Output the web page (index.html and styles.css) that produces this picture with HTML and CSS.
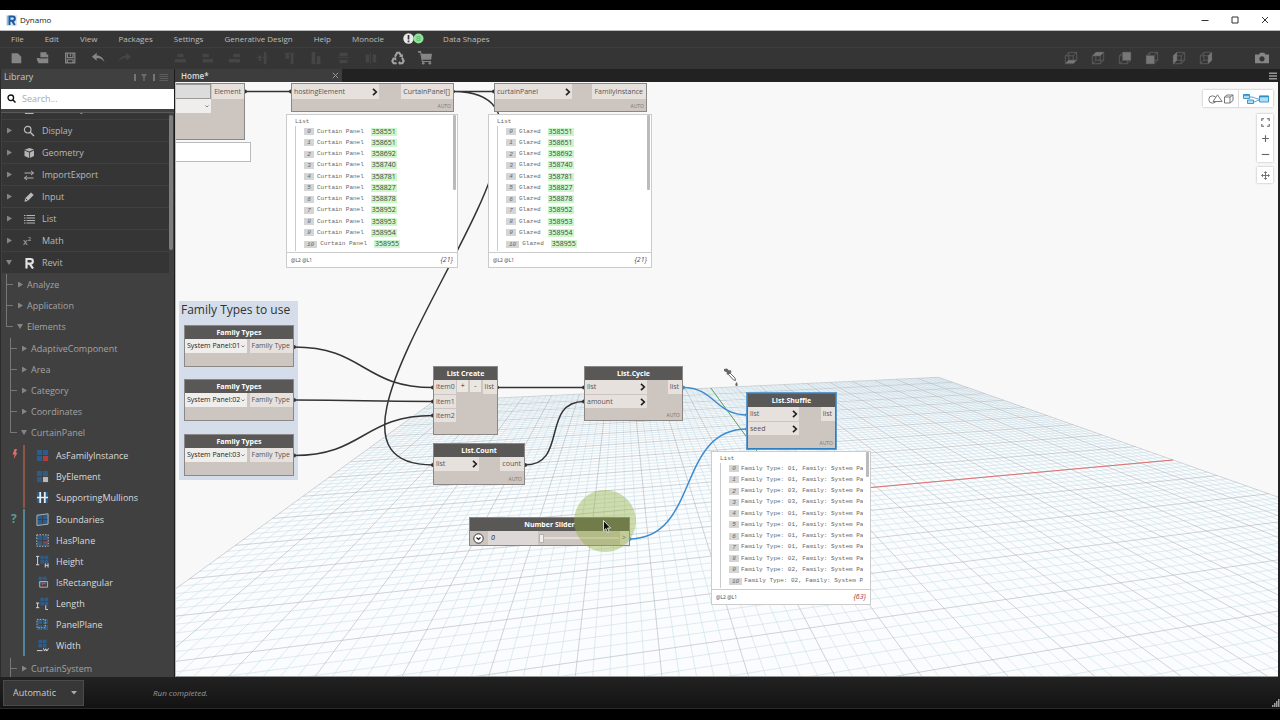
FILE: index.html
```html
<!DOCTYPE html>
<html lang="en">
<head>
<meta charset="utf-8">
<title>Dynamo</title>
<link rel="stylesheet" href="styles.css">
</head>
<body>
<svg class="defs" aria-hidden="true">
  <defs>
    <symbol id="panes" viewBox="0 0 14 14"><path d="M1 1h5.500v5.500H1zM7.500 1H13v5.500H7.500zM1 7.500h5.500V13H1zM7.500 7.500H13V13H7.500z"/></symbol>
    <symbol id="cube" viewBox="0 0 16 16"><path d="M1.500 5.500h9v9h-9zM5.500 1.500h9v9h-9zM1.500 5.500l4-4M10.500 5.500l4-4M10.500 14.500l4-4M1.500 14.500l4-4" fill="none" stroke="#5e5e5e"/></symbol>
    <symbol id="chev" viewBox="0 0 6 8"><path d="M1 .8 4.300 4 1 7.200" fill="none" stroke="#222" stroke-width="1.700"/></symbol>
  </defs>
</svg>
<header class="titlebar">
  <svg class="logo" viewBox="0 0 11 11"><path d="M0 0h11v11H0z" fill="#dbe6f1"/><path d="M3.500 10V1.500h3.200a2 2 0 0 1 0 4.300H3.500M6.200 6 8.800 10" fill="none" stroke="#1d5b9c" stroke-width="2"/><path d="M2 1v9" stroke="#4b8fce"/></svg>
  <span class="apptitle">Dynamo</span>
  <div class="winbuttons">
    <button aria-label="Minimize"><svg viewBox="0 0 8 8"><path d="M.5 4.500h7"/></svg></button>
    <button aria-label="Maximize"><svg viewBox="0 0 8 8"><path d="M1 1h6v6H1z"/></svg></button>
    <button aria-label="Close"><svg viewBox="0 0 8 8"><path d="m1 1 6 6M7 1 1 7"/></svg></button>
  </div>
</header>
<nav class="menubar">
  <button>File</button><button>Edit</button><button>View</button><button>Packages</button><button>Settings</button><button>Generative Design</button><button>Help</button><button>Monocle</button>
  <button class="notice" aria-label="Notifications"><svg viewBox="0 0 21 11"><circle cx="5.500" cy="5.500" r="5.200" fill="#e9e9e9"/><path d="M5.500 2v4.500M5.500 7.600v1.600" stroke="#333" stroke-width="1.700"/><circle cx="15.500" cy="5.500" r="5" fill="#8fe39a"/><path d="M14 3.500h3v4h-3zM14 5.500h3" fill="none" stroke="#6cbd78"/></svg></button>
  <button>Data Shapes</button>
</nav>
<div class="toolbar">
  <div class="tools file">
    <button aria-label="New"><svg viewBox="0 0 16 16"><path d="M3 2.500h7l4 4V14H3z"/></svg></button>
    <button aria-label="Open"><svg viewBox="0 0 16 16"><path d="M5 1.500h7V4h2v3.500H5zM1 8h13v6H3l-2-4z"/><path d="M4 8h9" stroke="#353535"/></svg></button>
    <button aria-label="Save"><svg viewBox="0 0 16 16"><path d="M3 2.500h10.500v11H3zM5 3v4.500h6.500V3M5 13.500v-3.500h6.500v3.500M8.500 3.500v2.500" fill="none" stroke="#858585" stroke-width="1.400"/></svg></button>
    <button aria-label="Undo"><svg viewBox="0 0 16 16"><path d="M1 6.500 6.500 2v3C11 5 14 7.500 15.500 12.500 12.500 9 10 8 6.500 8v3z"/></svg></button>
    <button aria-label="Redo" class="dim"><svg viewBox="0 0 16 16"><path d="M15 6.500 9.500 2v3C5 5 2 7.500.5 12.500 3.500 9 6 8 9.500 8v3z"/></svg></button>
  </div>
  <div class="tools align">
    <button class="dim" aria-label="Align X average"><svg viewBox="0 0 16 16"><path d="M5 3h7v4H5zM2 9h13v4H2z"/></svg></button>
    <button class="dim" aria-label="Align left"><svg viewBox="0 0 16 16"><path d="M3 3h7v4H3zM3 9h12v4H3z"/></svg></button>
    <button class="dim" aria-label="Align right"><svg viewBox="0 0 16 16"><path d="M7 3h8v4H7zM2 9h13v4H2z"/></svg></button>
    <button class="dim" aria-label="Align Y average"><svg viewBox="0 0 16 16"><path d="M4 5h3v6H4zM10 1h3v14h-3zM2 7h13v1H2z"/></svg></button>
    <button class="dim" aria-label="Align top"><svg viewBox="0 0 16 16"><path d="M3 2h11v1H3zM4 3h4v6H4zM10 3h3v12h-3z"/></svg></button>
    <button class="dim" aria-label="Align bottom"><svg viewBox="0 0 16 16"><path d="M3 1h4v13H3zM9 6h4v8H9zM2 14h12v1H2z"/></svg></button>
    <button class="dim" aria-label="Distribute Y"><svg viewBox="0 0 16 16"><path d="M4 2h9v4H4zM4 10h9v4H4zM2 7h13v1H2z"/></svg></button>
    <button class="dim" aria-label="Distribute X"><svg viewBox="0 0 16 16"><path d="M2 4h4v9H2zM10 4h4v9h-4zM7 2h1v13H7z"/></svg></button>
    <button aria-label="Recycle"><svg viewBox="0 0 16 16"><path d="m4.500 6.500 2.500-4.500h2.500l2 3.500M12.500 7.500l2 4-1.500 2.500H9.500M6.500 14H3L1.500 11.500l2-3.500" fill="none" stroke="#a2a2a2" stroke-width="2.400"/><path d="m9 6.500 4.500.5V3zM10.500 11v5L8 13.700zM1 8l5-1v4z" fill="#a2a2a2"/></svg></button>
    <button aria-label="Cart"><svg viewBox="0 0 16 16"><path d="M3 3h13l-1 7H4.500zM0 0h3.500v2H0z"/><path d="m3 1 2 11h10" fill="none" stroke="#858585" stroke-width="1.200"/><circle cx="6" cy="14" r="1.500"/><circle cx="13.500" cy="14" r="1.500"/></svg></button>
  </div>
  <div class="tools views">
    <button aria-label="Bottom"><svg viewBox="0 0 16 16"><use href="#cube"/><path d="M2 14l3-3.500h9L11 14z"/></svg></button>
    <button aria-label="Top"><svg viewBox="0 0 16 16"><use href="#cube"/><path d="M2 5.500l4-4h8.500l-4 4z"/></svg></button>
    <button aria-label="Back"><svg viewBox="0 0 16 16"><use href="#cube"/><path d="M5.500 1.500h9v9h-9z"/></svg></button>
    <button aria-label="Front"><svg viewBox="0 0 16 16"><use href="#cube"/><path d="M1.500 5.500h9v9h-9z"/></svg></button>
    <button aria-label="Left"><svg viewBox="0 0 16 16"><use href="#cube"/><path d="M1.500 5.500l4-4v9l-4 4z"/></svg></button>
    <button aria-label="Right"><svg viewBox="0 0 16 16"><use href="#cube"/><path d="M10.500 5.500l4-4v9l-4 4z"/></svg></button>
  </div>
  <div class="tools camera">
    <button aria-label="Export image"><svg viewBox="0 0 16 16"><path fill-rule="evenodd" d="M0 4h4.500L6 2h4.500L12 4h4v10H0zM8 6a3 3 0 1 0 .01 0z"/></svg></button>
  </div>
</div>
<div class="workarea">
  <aside class="library">
    <div class="libhead"><span>Library</span>
      <svg viewBox="0 0 34 9"><path d="M1 1v7M20 1v7" stroke="#aaa"/><path d="M7 1h6l-2.300 3.500V8H9.300V4.500z" fill="#6a6a6a"/><path d="M25.500 1.500H34M25.500 3.500H34M25.500 5.500H34M25.500 7.500H34" stroke="#5c5c5c"/></svg>
    </div>
    <label class="search"><svg viewBox="0 0 9 9"><circle cx="3.800" cy="3.800" r="2.800" fill="none" stroke="#111" stroke-width="1.300"/><path d="m6 6 2.500 2.500" stroke="#111" stroke-width="1.500"/></svg><input type="text" placeholder="Search..." aria-label="Search"></label>
    <div class="scroller">
      <div class="tree">
        <ul class="cats">
          <li><i></i><svg viewBox="0 0 12 12"><path d="M2.500 1.500h7.500v9H2.500z" fill="none" stroke="#b5b5b5" stroke-width="1.200"/></svg>Dictionary</li>
          <li><i></i><svg viewBox="0 0 12 12"><circle cx="4.700" cy="4.700" r="3.300" fill="none" stroke="#bbb" stroke-width="1.200"/><path d="m7 7 4 4" stroke="#bbb" stroke-width="1.500"/></svg>Display</li>
          <li><i></i><svg viewBox="0 0 12 12"><path d="M1.500 3.500 6 5.500V11L1.500 9zM6.800 5.500l4.200-2v5.500l-4.200 2zM1.500 2.800 6.500 1 11 2.500 6.400 4.600z" fill="#b5b5b5"/></svg>Geometry</li>
          <li><i></i><svg viewBox="0 0 12 12"><path d="M1.500 4h9M8 1.800 10.500 4 8 6M10.500 9h-9M4 6.800 1.500 9 4 11" fill="none" stroke="#b5b5b5"/></svg>ImportExport</li>
          <li><i></i><svg viewBox="0 0 12 12"><path d="m1.500 10.700.7-3.500L8 1.500l2.700 2.500-5.900 6z" fill="#bbb"/><path d="m2.500 7.500 2 2" stroke="#353535"/></svg>Input</li>
          <li><i></i><svg viewBox="0 0 12 12"><path d="M1 2.500h1.500M3.500 2.500H12M1 5h1.500M3.500 5H12M1 7.500h1.500M3.500 7.500H12M1 10h1.500M3.500 10H12" stroke="#b5b5b5" stroke-width="1.200"/></svg>List</li>
          <li><i></i><span class="mathicon">x<sup>2</sup></span>Math</li>
          <li class="open"><i></i><svg viewBox="0 0 12 12"><path d="M3.500 11.500V2h4a2.200 2.200 0 0 1 0 4.700h-3M6.800 6.800 10 11.500" fill="none" stroke="#e3e3e3" stroke-width="2.200"/></svg>Revit</li>
        </ul>
        <ul class="lvl one">
          <li><b></b><i></i>Analyze</li>
          <li><b></b><i></i>Application</li>
          <li class="open last"><b></b><i></i>Elements</li>
        </ul>
        <ul class="lvl two">
          <li><b></b><i></i>AdaptiveComponent</li>
          <li><b></b><i></i>Area</li>
          <li><b></b><i></i>Category</li>
          <li><b></b><i></i>Coordinates</li>
          <li class="open last"><b></b><i></i>CurtainPanel</li>
        </ul>
        <div class="members create">
          <svg class="kind" viewBox="0 0 8 12"><path d="M3.500 0h3L5 4.500h2L2.500 12l1-5.500H1z" fill="#e0696b"/></svg>
          <ul>
            <li><svg viewBox="0 0 14 14"><use href="#panes"/><path d="M7.500 7.500H13V13H7.500z" fill="#b23c3c"/></svg>AsFamilyInstance</li>
            <li><svg viewBox="0 0 14 14"><use href="#panes"/><path d="M7.500 7.500H13V13H7.500z" fill="#b9b9b9"/></svg>ByElement</li>
            <li><svg viewBox="0 0 14 14"><use href="#panes"/><path d="M4.500 1v12M9.500 1v12M1 7h12" stroke="#e6eef5" stroke-width="1.800"/></svg>SupportingMullions</li>
          </ul>
        </div>
        <div class="members query">
          <span class="kind">?</span>
          <ul>
            <li><svg viewBox="0 0 14 14"><use href="#panes"/><path d="M1 2.500 13 .8V12L1 13.500z" fill="none" stroke="#b5b5b5"/></svg>Boundaries</li>
            <li><svg viewBox="0 0 14 14"><use href="#panes"/><path d="M.8.8h12.400v12.400H.8z" fill="none" stroke="#c5c5c5" stroke-dasharray="1.500 1.500"/><path d="M9 9h3v3" fill="none" stroke="#b23c3c"/></svg>HasPlane</li>
            <li><svg viewBox="0 0 14 14"><use href="#panes" x="4" width="10" height="10"/><path d="M0 1.500h3.500M1.700 1.500v9M0 10.500h3.500M10 9v4.500M13 9v4.500M10 11.200h3" fill="none" stroke="#ddd"/></svg>Height</li>
            <li><svg viewBox="0 0 14 14"><use href="#panes" x="2" width="10" height="10"/><path d="M4 6h8.500v6H4z" fill="none" stroke="#b8b8b8"/><path d="M7 10V7.500h2.500V9" fill="none" stroke="#c25555"/></svg>IsRectangular</li>
            <li><svg viewBox="0 0 14 14"><use href="#panes" x="4" width="10" height="10"/><path d="M0 6.500h3.500M1.700 6.500v5M0 11.500h3.500M10.500 9v4.500H13" fill="none" stroke="#ddd"/></svg>Length</li>
            <li><svg viewBox="0 0 14 14"><use href="#panes"/><path d="M1 1.500h9v9H1z" fill="none" stroke="#aebccb" stroke-dasharray="1.500 1.500"/></svg>PanelPlane</li>
            <li><svg viewBox="0 0 14 14"><use href="#panes" x="2" width="10" height="10"/><path d="M1 12.500h6M8 10l1.300 3 1.200-2.500 1.200 2.500L13.500 10" fill="none" stroke="#ddd"/></svg>Width</li>
          </ul>
        </div>
        <ul class="lvl two"><li><b></b><i></i>CurtainSystem</li></ul>
      </div>
      <div class="track"><div class="thumb"></div></div>
    </div>
  </aside>
  <main class="workspace">
    <div class="tabs"><div class="tab">Home*<button aria-label="Close tab"><svg viewBox="0 0 7 7"><path d="m.8.8 5.400 5.400M6.200.8.8 6.200" stroke="#999"/></svg></button></div>
      <button class="burger" aria-label="Tabs menu"><svg viewBox="0 0 8 8"><path d="M0 1.300h8M0 4h8M0 6.700h8" stroke="#999" stroke-width="1.400"/></svg></button></div>
    <div class="canvas">
      <svg class="grid" id="grid" viewBox="175 82 1105 595"></svg>
      <div class="group"><h2>Family Types to use</h2></div>
      <svg class="wires" viewBox="175 82 1105 595">
        <path d="M245 91.500h46M453 91.500h41M453 91.500C628 91.500 258 465 433 465M294 347C364 347 363 387.500 433 387.500M294 400C364 400 363 401.500 433 401.500M294 455.500C364 455.500 363 415.500 433 415.500M497 387.500h87M525 465C568 465 541 401.500 584 401.500"/>
        <path class="blue" d="M683 387.500C715 387.500 715 415 747 415M629 539C700 539 676 429 747 429"/>
        <path class="dots" d="M245 91.500h0M291 91.500h0M453 91.500h0M494 91.500h0M294 347h0M294 400h0M294 455.500h0M433 387.500h0M433 401.500h0M433 415.500h0M433 465h0M497 387.500h0M525 465h0M584 387.500h0M584 401.500h0"/>
        <path class="dots blue" d="M683 387.500h0M747 415h0M747 429h0M629.500 539h0"/>
      </svg>

      <section class="node n-elem"><div class="ports"><div class="stack"><span class="blank"></span><select aria-label="Element category"></select></div><span class="port out">Element</span></div></section>
      <div class="note"></div>
      <section class="node n-host"><div class="ports"><div class="ins"><span class="port">hostingElement<svg><use href="#chev"/></svg></span></div><span class="port out">CurtainPanel[]</span></div><small>AUTO</small></section>
      <section class="node n-inst"><div class="ports"><div class="ins"><span class="port">curtainPanel<svg><use href="#chev"/></svg></span></div><span class="port out">FamilyInstance</span></div><small>AUTO</small></section>

      <section class="node fam f1"><h3>Family Types</h3><div class="ports"><select aria-label="Family type 1"><option>System Panel:01</option></select><span class="port out">Family Type</span></div></section>
      <section class="node fam f2"><h3>Family Types</h3><div class="ports"><select aria-label="Family type 2"><option>System Panel:02</option></select><span class="port out">Family Type</span></div></section>
      <section class="node fam f3"><h3>Family Types</h3><div class="ports"><select aria-label="Family type 3"><option>System Panel:03</option></select><span class="port out">Family Type</span></div></section>

      <section class="node n-create"><h3>List Create</h3><div class="ports"><div class="ins"><span class="port">item0</span><span class="port">item1</span><span class="port">item2</span></div><button>+</button><button>-</button><span class="port out">list</span></div></section>
      <section class="node n-count"><h3>List.Count</h3><div class="ports"><div class="ins"><span class="port">list<svg><use href="#chev"/></svg></span></div><span class="port out">count</span></div><small>AUTO</small></section>
      <section class="node n-cycle"><h3>List.Cycle</h3><div class="ports"><div class="ins"><span class="port">list<svg><use href="#chev"/></svg></span><span class="port">amount<svg><use href="#chev"/></svg></span></div><span class="port out">list</span></div><small>AUTO</small></section>
      <section class="node n-shuffle"><h3>List.Shuffle</h3><div class="ports"><div class="ins"><span class="port">list<svg><use href="#chev"/></svg></span><span class="port">seed<svg><use href="#chev"/></svg></span></div><span class="port out">list</span></div><small>AUTO</small></section>
      <section class="node n-slider"><h3>Number Slider</h3><div class="ports"><button class="expand" aria-label="Slider settings"><svg viewBox="0 0 11 11"><circle cx="5.500" cy="5.500" r="4.700" fill="#fff" stroke="#333"/><path d="M3.500 4.500 5.500 6.500l2-2" fill="none" stroke="#222" stroke-width="1.200"/></svg></button><output>0</output><input type="range" min="0" max="100" value="0" aria-label="Number"><span class="port out">&gt;</span></div></section>

      <section class="preview p-host" data-kind="Curtain Panel" data-count="{21}"></section>
      <section class="preview p-inst" data-kind="Glazed" data-count="{21}"></section>
      <section class="preview p-shuffle" data-kind="types" data-count="{63}"></section>

      <svg class="picker" viewBox="0 0 16 20"><path d="M1 1l3-.500 2 2 1.500-.5 1 2L5.500 7 3.500 6 4 4.500 1 3z" fill="#666"/><path d="m5.500 6.500 1.500-1.500 5 5 .5 2.500-2-.5z" fill="#fff" stroke="#666"/><path d="M13.500 14c2 2.500 1 4 0 4s-2-1.500 0-4z" fill="#666"/></svg>
      <div class="halo"></div>
      <svg class="cursor" viewBox="0 0 8 13"><path d="M.5.5v10.300l2.400-2.200 1.600 3.700 1.600-.7-1.600-3.600H7.600z" fill="#111" stroke="#fff" stroke-width=".8"/></svg>

      <div class="switcher">
        <button aria-label="3D preview"><svg viewBox="0 0 26 10"><g fill="none" stroke="#777"><circle cx="4.500" cy="5.500" r="3.700"/><path d="M9.500.8 14 7.500H5z" fill="#fff"/><path d="M16.500 3h5.500v6h-5.500zM16.500 3l2.500-2h6l-3 2M25 1v5.500L22 9"/></g></svg></button>
        <button aria-label="Graph view"><svg viewBox="0 0 26 10"><path d="M7 3c6 0 4 2 10 2M10 8c4 0 3-2 7-2" fill="none" stroke="#49a3d6"/><path d="M.5.5h6v4h-6zM4.500 6h6v3.500h-6zM16.500 2h9v6h-9z" fill="#b3dcf1" stroke="#3b9bd1"/><path d="M.5 1h6M16.500 2.500h9" stroke="#2f8fc6" stroke-width="1.600"/></svg></button>
      </div>
      <div class="zoomer">
        <button aria-label="Fit"><svg viewBox="0 0 8 8"><path d="M.7 2.700v-2h2M5.300.7h2v2M7.300 5.300v2h-2M2.700 7.300h-2v-2"/></svg></button>
        <button aria-label="Zoom in"><svg viewBox="0 0 8 8"><path d="M4 1v6M1 4h6"/></svg></button>
        <button aria-label="Zoom out"><svg viewBox="0 0 8 8"><path d="M.7 4h6.600"/></svg></button>
      </div>
      <div class="zoomer pan"><button aria-label="Pan"><svg viewBox="0 0 10 10"><path d="M5 1v8M1 5h8M3.500 2 5 .7 6.500 2M3.500 8 5 9.300 6.500 8M2 3.500.7 5 2 6.500M8 3.500 9.300 5 8 6.500"/></svg></button></div>
    </div>
  </main>
</div>
<footer class="status">
  <div class="runmode"><select aria-label="Run mode"><option>Automatic</option></select><svg viewBox="0 0 6 4"><path d="M0 0h6L3 3.500z" fill="#aaa"/></svg></div>
  <span class="message">Run completed.</span>
  <svg class="grip" viewBox="0 0 8 8"><path d="M6 1h1.500M4 3h1.500M6 3h1.500M2 5h1.500M4 5h1.500M6 5h1.500M0 7h1.500M2 7h1.500M4 7h1.500M6 7h1.500" stroke="#ccc" stroke-width="1.500"/></svg>
</footer>
<script src="graph.js"></script>
</body>
</html>
```

FILE: styles.css
```css
* { box-sizing: border-box; }
body {
  margin: 0; height: 100vh; padding: 10px 0 11px; overflow: hidden;
  display: flex; flex-direction: column; background: #000;
  font: 9px/12px "Open Sans", "Noto Sans", sans-serif; color: #aaa;
}
ul { list-style: none; margin: 0; padding: 0; }
button { border: 0; padding: 0; background: none; font: inherit; color: inherit; display: flex; align-items: center; justify-content: center; }
select, input { font: inherit; border: 0; margin: 0; outline: 0; appearance: none; border-radius: 0; }
.defs { position: absolute; width: 0; height: 0; }

.titlebar { flex: none; height: 21px; background: #fff; border-bottom: 1px solid #bbb; display: flex; align-items: center; padding-left: 6px; gap: 3px; color: #222; font-size: 8px; }
.logo { width: 11px; height: 11px; }
.winbuttons { margin-left: auto; display: flex; }
.winbuttons button { width: 30px; height: 20px; }
.winbuttons svg { width: 8px; height: 8px; fill: none; stroke: #333; }

.menubar { flex: none; height: 17px; background: #353535; display: flex; align-items: center; gap: 21px; padding: 0 0 1px 11px; font-size: 8px; color: #bdbdbd; border-bottom: 1px solid #3d3d3d; }
.notice { margin: 0 -2px; }
.notice svg { width: 21px; height: 11px; }

.toolbar { flex: none; height: 21px; background: #353535; display: flex; align-items: center; padding: 0 0 1px 2px; }
.tools { display: grid; grid-auto-flow: column; grid-auto-columns: 1fr; fill: #858585; }
.tools svg { width: 14px; height: 14px; }
.tools .dim { fill: #454545; }
.file { width: 137px; }
.align { width: 273px; margin-left: 27px; }
.views { width: 163px; margin-left: auto; fill: #777; }
.camera { width: 27px; margin: 0 5px 0 28px; }

.workarea { flex: 1; min-height: 0; display: flex; }
.library { flex: none; width: 175px; background: #404040; border-left: 1px solid #2c2c2c; border-right: 1px solid #1c1c1c; display: flex; flex-direction: column; }
.libhead { height: 20px; display: flex; align-items: center; justify-content: space-between; padding: 0 6px 4px 3px; color: #c6c6c6; }
.libhead svg { width: 34px; height: 9px; }
.search { height: 20px; background: #fff; display: flex; align-items: center; padding: 0 0 1px 6px; gap: 5px; }
.search svg { width: 9px; height: 9px; }
.search input { flex: 1; min-width: 0; height: 18px; padding: 0 0 0 1px; background: none; }
.search input::placeholder { color: #aaa; }
.scroller { flex: 1; min-height: 0; margin-top: 3px; border-top: 1px solid #5a5a5a; display: flex; overflow: hidden; padding-left: 1px; }
.tree { flex: 1; margin-top: -15px; }
.track { width: 5px; padding-top: 2px; }
.thumb { width: 4px; height: 135px; border-radius: 2px; background: #7c7c7c; }
.tree li { display: flex; align-items: center; }
.tree i { flex: none; width: 5px; height: 6px; background: #858585; clip-path: polygon(0 0, 100% 50%, 0 100%); }
.tree .open > i { width: 6px; height: 5px; clip-path: polygon(0 0, 100% 0, 50% 100%); }
.cats li { height: 22px; background: #353535; border-bottom: 1px solid #404040; padding-left: 5px; color: #b9b9b9; }
.cats svg, .mathicon { width: 12px; height: 12px; margin: 0 7px 0 11px; }
.cats .open i { margin-left: -1px; }
.mathicon { font-size: 9px; line-height: 13px; }
.mathicon sup { font-size: 6px; line-height: 0; }
.lvl { color: #a3a3a3; margin-bottom: 1px; }
.lvl li { height: 21px; padding-left: 4px; }
.lvl b { width: 7px; height: 21px; border-left: 1px solid #777; background: linear-gradient(#777, #777) 0 10px / 7px 1px no-repeat; margin-right: 5px; }
.lvl .last b { height: 11px; align-self: flex-start; border-bottom: 1px solid #777; background: none; }
.lvl i { margin-right: 4px; }
.lvl .open i { margin: 0 4px 0 -1px; }
.two { margin-bottom: 2px; }
.two li { padding-left: 8px; }
.members { display: flex; margin-bottom: 1px; color: #dadada; }
.members ul { border-left: 2px solid #8e5445; padding-left: 11px; }
.query { margin-bottom: 2px; }
.query ul { border-color: #4f8799; }
.members li { height: 21px; font-weight: 500; }
.members li svg { width: 13px; height: 13px; margin-right: 7px; fill: #2c5c8a; }
.members .kind { width: 8px; height: 12px; margin: 4px 4px 0 9px; }
.members svg.kind { height: 10px; }
.query .kind { color: #579c94; font-size: 12px; font-weight: 700; }

.workspace { flex: 1; min-width: 0; display: flex; flex-direction: column; background: #222; }
.tabs { flex: none; height: 13px; display: flex; justify-content: space-between; align-items: center; padding-right: 3px; }
.tab { width: 167px; height: 13px; padding: 0 3px 0 6px; background: #3d3d3d; display: flex; align-items: center; justify-content: space-between; font-size: 8px; font-weight: 600; color: #ddd; }
.tab svg { width: 7px; height: 7px; }
.burger svg { width: 8px; height: 8px; }

.canvas { flex: 1; position: relative; overflow: hidden; background: #f8f8f8; margin-right: 2px; border-bottom: 1px solid #999; border-left: 1px solid #bbb; font-size: 7px; line-height: 10px; color: #555; }
.grid, .wires { position: absolute; left: -1px; top: 0; width: 1105px; height: 595px; }
.grid path { fill: none; stroke-width: 1; }
.grid .floor { fill: #fafcfd; }
.grid .minor { stroke: #c2d8e2; stroke-width: .5; }
.grid .major { stroke: #a3abb0; stroke-width: .5; }
.grid .red { stroke: #e0706f; }
.grid .green { stroke: #63a868; }
.wires path { fill: none; stroke: #333; stroke-width: 1.5; }
.wires .dots { stroke-width: 4; stroke-linecap: round; }
.wires .blue { stroke: #3c8bd0; }

.group { position: absolute; left: 3px; top: 219px; width: 119px; height: 179px; background: #d4dde9; padding: 1px 2px; }
.group h2 { margin: 0; font-size: 12px; line-height: 15px; font-weight: 400; color: #333; white-space: nowrap; }

.node { position: absolute; background: #cdc5bf; border: 1px solid #8b8785; }
.node h3 { margin: 0; height: 13px; line-height: 14px; font-size: 7px; font-weight: 700; color: #fff; background: #5a5856; text-align: center; }
.ports { display: flex; align-items: flex-start; justify-content: space-between; }
.ins { display: grid; grid-auto-rows: 14px; }
.port { height: 14px; padding: 0 3px 0 2px; background: #e6e1dd; display: flex; align-items: center; justify-content: space-between; white-space: nowrap; }
.ins .port { padding-right: 1px; }
.ins .port + .port { border-top: 1px solid #cdc5bf; }
.port svg { width: 6px; height: 8px; }
.node small { position: absolute; right: 2px; bottom: 1px; font-size: 5px; line-height: 8px; color: #777; }
.node select { height: 14px; background: #f0eeec url("data:image/svg+xml,%3Csvg xmlns='http://www.w3.org/2000/svg' viewBox='0 0 4 3'%3E%3Cpath d='M.5.5 2 2 3.500.5' fill='none' stroke='%23555' stroke-width='.7'/%3E%3C/svg%3E") no-repeat right 2px center / 4px 3px; color: #222; padding: 0 0 1px 2px; }
.n-elem { left: -2px; top: 1px; width: 71px; height: 57px; }
.stack { display: grid; width: 36px; }
.stack .blank { height: 15px; background: #dcdcdc; border: 1px solid #999; }
.stack select { width: 36px; }
.note { position: absolute; left: -2px; top: 60px; width: 77px; height: 20px; background: #fff; border: 1px solid #bbb; }
.n-host { left: 115px; top: 1px; width: 163px; height: 29px; }
.n-host .ins { width: 87px; }
.n-inst { left: 318px; top: 1px; width: 153px; height: 29px; }
.n-inst .ins { width: 77px; }
.n-elem .port, .n-host .port, .n-inst .port { height: 15px; padding-top: 1px; }
.fam { left: 8px; width: 110px; height: 42px; }
.fam select { width: 62px; }
.f1 { top: 243px; } .f2 { top: 297px; } .f3 { top: 352px; }
.n-create { left: 257px; top: 284px; width: 65px; height: 69px; }
.n-create button { width: 11px; height: 12px; background: #eae6e2; color: #333; }
.n-count { left: 257px; top: 361px; width: 92px; height: 42px; }
.n-count .ins { width: 45px; }
.n-cycle { left: 408px; top: 284px; width: 99px; height: 55px; }
.n-cycle .ins { width: 62px; }
.n-shuffle { left: 571px; top: 311px; width: 89px; height: 56px; border-color: #2c7fc4; box-shadow: 0 0 0 1px #5a9bd2; }
.n-shuffle .ins { width: 51px; }
.n-slider { left: 293px; top: 435px; width: 161px; height: 29px; }
.n-slider .ports { height: 14px; align-items: center; }
.expand { width: 17px; height: 14px; }
.expand svg { width: 11px; height: 11px; }
.n-slider output { width: 50px; height: 14px; padding-left: 3px; line-height: 14px; font-style: italic; color: #222; background: #ddd8d5; }
.n-slider input { width: 80px; height: 14px; background: linear-gradient(#e4dfdc, #e4dfdc) 0 6px / 100% 2px no-repeat; }
.n-slider input::-webkit-slider-thumb { appearance: none; width: 5px; height: 9px; background: #f2f0ee; border: 1px solid #b8b2ad; }

.preview { position: absolute; background: #fff; border: 1px solid #ccc; font: 6px/8px "Liberation Mono", monospace; color: #666; height: 154px; display: flex; flex-direction: column; }
.p-host { left: 110px; top: 32px; width: 172px; }
.p-inst { left: 312px; top: 32px; width: 164px; }
.p-shuffle { left: 535px; top: 369px; width: 160px; }
.preview .body { flex: 1; min-height: 0; display: flex; padding: 0 1px 1px 8px; border-bottom: 1px solid #ccc; }
.preview .list { flex: 1; min-width: 0; padding-top: 3px; overflow: hidden; }
.preview .rows { height: 135px; display: grid; grid-template-rows: repeat(12, 1fr); padding-left: 8px; border-left: 1px solid #ccc; }
.preview .rows li { display: flex; align-items: center; gap: 3px; white-space: pre; }
.preview em { background: #d5d5d5; padding: 0 3px; line-height: 7px; font-style: italic; min-width: 10px; text-align: center; }
.preview mark { margin-left: 4px; background: #ccf7cb; color: #444; font: 7px/8px "Open Sans", sans-serif; padding: 0 1px; }
.preview .bar { flex: none; width: 3px; height: 75px; margin-left: 3px; background: #bbb; border-radius: 1px; }
.p-shuffle .bar { height: 25px; }
.p-shuffle .rows li { gap: 2px; }
.preview .foot { height: 14px; display: flex; justify-content: space-between; align-items: center; padding: 0 4px; }
.foot span { font: 5px/8px "Open Sans", sans-serif; color: #444; }
.foot strong { font: italic 7px/10px "Open Sans", sans-serif; color: #6d4444; }
.p-shuffle .foot strong { color: #a03030; }

.picker { position: absolute; left: 547px; top: 286px; width: 16px; height: 20px; }
.halo { position: absolute; left: 398px; top: 408px; width: 62px; height: 62px; border-radius: 50%; background: rgba(145, 175, 60, .42); }
.cursor { position: absolute; left: 427px; top: 438px; width: 8px; height: 13px; }
.switcher { position: absolute; right: 5px; top: 8px; height: 17px; display: flex; background: #fff; box-shadow: 0 0 2px #aaa; }
.switcher button { width: 35px; }
.switcher button + button { border-left: 1px solid #ddd; }
.switcher svg { width: 26px; height: 10px; }
.zoomer { position: absolute; right: 5px; top: 32px; width: 16px; background: #fff; box-shadow: 0 0 2px #aaa; }
.zoomer button { width: 16px; height: 16px; }
.zoomer svg { width: 9px; height: 9px; fill: none; stroke: #666; }
.pan { top: 85px; }

.status { flex: none; height: 32px; background: linear-gradient(#222, #131313); border-bottom: 1px solid #2a2a2a; display: flex; align-items: center; padding-left: 3px; position: relative; }
.runmode { width: 81px; height: 26px; background: #373737; border: 1px solid #4b4b4b; display: flex; align-items: center; padding: 0 6px 0 9px; }
.runmode select { flex: 1; min-width: 0; background: none; color: #ccc; padding: 0; }
.runmode svg { width: 6px; height: 4px; }
.message { margin-left: 69px; font-size: 8px; font-style: italic; color: #999; }
.grip { margin: auto 0 1px auto; width: 8px; height: 8px; }
```

FILE: graph.js
```js
// Ground plane: unit square corners projected to the workspace view.
const A = 596.3, B = 540.9, C = 789, D = 48.3, E = 231, F = 495, G = 0.181, H = 0.8711;
const project = (u, v) => {
  const w = 1 + G * u + H * v;
  return ((A * u + B * v + C) / w).toFixed(1) + ' ' + ((D * u + E * v + F) / w).toFixed(1);
};
const NEAR = -0.75, HALF = 50;
const segment = (a, b) => 'M' + project(...a) + 'L' + project(...b);
let minor = '', major = '';
for (let i = -HALF; i <= HALF; i++) {
  const t = i / HALF;
  let d = segment([t, 1], [t, NEAR]);
  if (t >= NEAR) d += segment([-1, t], [1, t]);
  if (i % 5 === 0) major += d; else minor += d;
}
const floor = 'M' + [[-1, 1], [1, 1], [1, NEAR], [-1, NEAR]].map(p => project(...p)).join('L') + 'Z';
document.getElementById('grid').innerHTML =
  `<path class="floor" d="${floor}"/><path class="minor" d="${minor}"/><path class="major" d="${major}"/>` +
  `<path class="red" d="${segment([0, 0], [1, 0])}"/><path class="green" d="${segment([0, 0], [0, 1])}"/>`;

// Output previews under the nodes.
const ids = [358551, 358651, 358692, 358740, 358781, 358827, 358878, 358952, 358953, 358954, 358955, 358956];
const types = ['01', '01', '03', '03', '01', '01', '01', '01', '02', '02', '02', '03'];
document.querySelectorAll('.preview').forEach(box => {
  const kind = box.dataset.kind;
  const rows = ids.map((id, i) => `<li><em>${i}</em>` + (kind === 'types'
    ? `Family Type: ${types[i]}, Family: System P${i < 10 ? 'a' : ''}</li>`
    : `${kind}<mark>${id}</mark></li>`)).join('');
  box.innerHTML = `<div class="body"><div class="list">List<ul class="rows">${rows}</ul></div><div class="bar"></div></div>` +
    `<div class="foot"><span>@L2 @L1</span><strong>${box.dataset.count}</strong></div>`;
});
```
